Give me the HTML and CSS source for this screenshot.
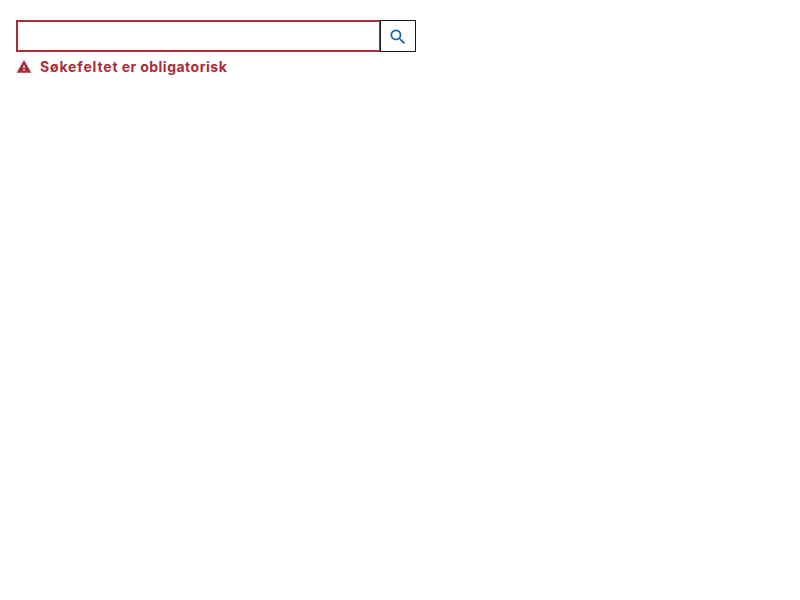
FILE: index.html
```html
<!DOCTYPE html>
<html lang="nb">
<head>
<meta charset="utf-8">
<title>Søk</title>
<link rel="stylesheet" href="styles.css">
</head>
<body>
<form class="search">
  <div class="search-row">
    <input class="search-input" type="text" aria-label="Søk" aria-invalid="true">
    <button class="search-button" type="button" aria-label="Søk">
      <svg class="search-icon" viewBox="0 0 24 24"><path d="M15.5 14h-.79l-.28-.27A6.47 6.47 0 0 0 16 9.500 6.500 6.500 0 1 0 9.500 16c1.610 0 3.090-.59 4.230-1.570l.27.28v.79l5 4.990L20.490 19l-4.990-5zm-6 0C7.010 14 5 11.990 5 9.500S7.010 5 9.500 5 14 7.010 14 9.500 11.990 14 9.500 14z"/></svg>
    </button>
  </div>
  <div class="error">
    <svg class="error-icon" viewBox="0 0 24 24"><path d="M1 20.500h22L12 1.500 1 20.500zm12-3h-2v-2h2v2zm0-4h-2v-4h2v4z"/></svg>
    <span class="error-text"><span class="error-lead">Søkefeltet</span> er obligatorisk</span>
  </div>
</form>
</body>
</html>
```
FILE: styles.css
```css
body {
  margin: 0;
  padding: 20px 16px;
  background: #fff;
  font-family: Inter, sans-serif;
}

.search {
  width: 400px;
}

.search-row {
  display: flex;
  height: 32px;
}

.search-input {
  box-sizing: border-box;
  flex: 1;
  min-width: 0;
  height: 32px;
  padding: 0 8px;
  border: 2px solid #a82d3a;
  border-radius: 0;
  background: #fff;
}

.search-button {
  box-sizing: border-box;
  display: flex;
  align-items: center;
  justify-content: center;
  width: 36px;
  height: 32px;
  margin-left: -1px;
  padding: 2px 0 0;
  border: 1px solid #1a1a1a;
  background: #fff;
}

.search-icon {
  width: 20px;
  height: 20px;
  fill: #1362ae;
}

.error {
  display: flex;
  align-items: center;
  gap: 8px;
  margin-top: 4px;
  color: #a82d3a;
}

.error-icon {
  width: 16px;
  height: 16px;
  fill: currentColor;
}

.error-text {
  font-size: 14px;
  font-weight: 700;
  line-height: 22px;
  letter-spacing: 0.5px;
  word-spacing: -0.5px;
}

.error-lead {
  letter-spacing: 0.85px;
}
```
